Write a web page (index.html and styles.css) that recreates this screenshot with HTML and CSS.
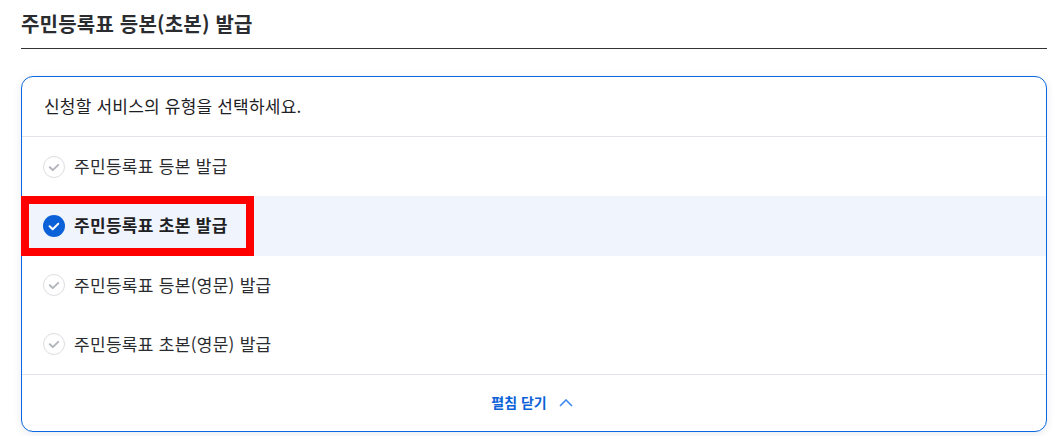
FILE: index.html
```html
<!DOCTYPE html>
<html lang="ko">
<head>
    <meta charset="UTF-8">
    <title>주민등록표 등본(초본) 발급</title>
    <link rel="stylesheet" href="styles.css">
</head>
<body>
    <h2 class="page-title">주민등록표 등본(초본) 발급</h2>

    <div class="select-card">
        <div class="select-head">신청할 서비스의 유형을 선택하세요.</div>
        <ul class="select-list">
            <li class="select-item">
                <svg class="check" viewBox="0 0 22 22"><circle cx="11" cy="11" r="10.5" fill="#fff" stroke="#dcdde2"/><path d="M6.8 11.3l3 2.8 5.4-5.2" fill="none" stroke="#b4b6bd" stroke-width="2" stroke-linecap="round" stroke-linejoin="round"/></svg>
                <span>주민등록표 등본 발급</span>
            </li>
            <li class="select-item active">
                <svg class="check" viewBox="0 0 22 22"><circle cx="11" cy="11" r="11" fill="#0b62d8"/><path d="M6.6 11.3l3.1 2.9 5.6-5.4" fill="none" stroke="#fff" stroke-width="2" stroke-linecap="round" stroke-linejoin="round"/></svg>
                <span>주민등록표 초본 발급</span>
                <span class="red-mark"></span>
            </li>
            <li class="select-item">
                <svg class="check" viewBox="0 0 22 22"><circle cx="11" cy="11" r="10.5" fill="#fff" stroke="#dcdde2"/><path d="M6.8 11.3l3 2.8 5.4-5.2" fill="none" stroke="#b4b6bd" stroke-width="2" stroke-linecap="round" stroke-linejoin="round"/></svg>
                <span>주민등록표 등본(영문) 발급</span>
            </li>
            <li class="select-item">
                <svg class="check" viewBox="0 0 22 22"><circle cx="11" cy="11" r="10.5" fill="#fff" stroke="#dcdde2"/><path d="M6.8 11.3l3 2.8 5.4-5.2" fill="none" stroke="#b4b6bd" stroke-width="2" stroke-linecap="round" stroke-linejoin="round"/></svg>
                <span>주민등록표 초본(영문) 발급</span>
            </li>
        </ul>
        <div class="select-foot">
            <span class="foot-label">펼침 닫기</span>
            <svg class="arrow" viewBox="0 0 14 8"><path d="M1 7l6-6 6 6" fill="none" stroke="#3d8bf0" stroke-width="1.6"/></svg>
        </div>
    </div>
</body>
</html>
```

FILE: styles.css
```css
* {
    box-sizing: border-box;
}

body {
    font-family: "Noto Sans CJK KR", "Noto Sans", sans-serif;
    background-color: #fff;
    color: #1e2124;
    margin: 0;
    padding: 0 17px 0 21px;
    height: 436px;
    overflow: hidden;
}

.page-title {
    font-size: 20px;
    font-weight: 700;
    line-height: 30px;
    letter-spacing: 0.2px;
    color: #2a2c30;
    margin: 0 0 27px;
    padding: 9px 0 9px;
    height: 49px;
    border-bottom: 1px solid #333;
}

.select-card {
    position: relative;
    height: 356px;
    background-color: #fff;
    border: 1px solid #0b68e0;
    border-radius: 12px;
    box-shadow: 0 2px 8px rgba(40, 60, 110, 0.1);
}

.select-head {
    height: 60px;
    padding: 0 22px;
    font-size: 17px;
    line-height: 58px;
    letter-spacing: 0.2px;
    color: #1e2124;
    border-bottom: 1px solid #e3e4ea;
}

.select-list {
    list-style: none;
    margin: 0;
    padding: 0;
    border-bottom: 1px solid #e3e4ea;
}

.select-item {
    position: relative;
    display: flex;
    align-items: center;
    gap: 9px;
    height: 59.25px;
    padding: 0 21px;
    font-size: 17px;
    letter-spacing: 0.3px;
    color: #2a2c30;
}

.select-item > span:not(.red-mark) {
    position: relative;
    top: -1px;
}

.select-item.active {
    background-color: #eff4fd;
    font-weight: 700;
    color: #1e2124;
}

.check {
    width: 22px;
    height: 22px;
    flex: none;
}

/* red box sits over the selected row */
.red-mark {
    position: absolute;
    left: -1px;
    top: 0;
    width: 233px;
    height: 100%;
    border: 8px solid #f00;
}

.select-foot {
    display: flex;
    align-items: center;
    justify-content: center;
    gap: 12px;
    height: 56px;
    padding-right: 4px;
    font-size: 14px;
    font-weight: 700;
    color: #0b62d8;
}

.foot-label {
    position: relative;
    top: -1px;
}

.arrow {
    width: 14px;
    height: 8px;
}
```
